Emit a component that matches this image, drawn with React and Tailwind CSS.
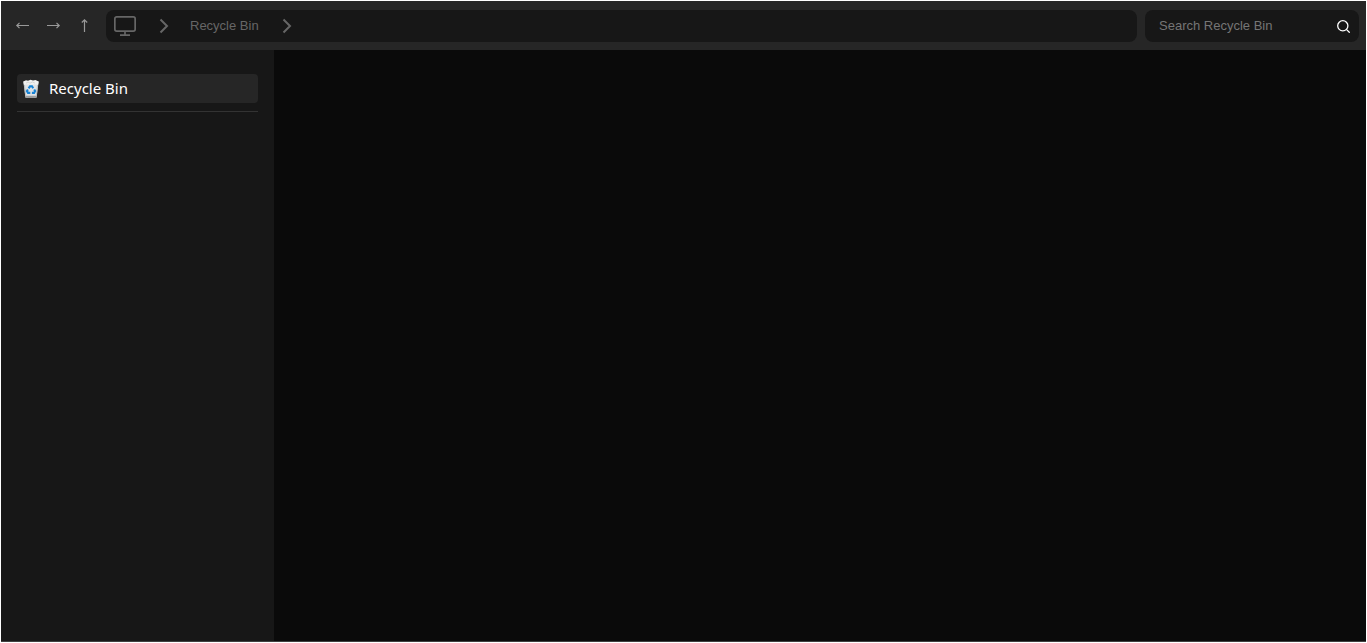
import React, { useState } from 'react';

const ArrowIcon = ({ className }) => (
  <svg width="15" height="15" viewBox="0 0 15 15" fill="none" stroke="currentColor" strokeWidth="1.2" className={className}>
    <path d="M1.5 7.5H14M4.5 4.8L1.8 7.5L4.5 10.2" />
  </svg>
);

const MonitorIcon = () => (
  <svg width="24" height="24" viewBox="0 0 24 24" fill="none" stroke="currentColor" strokeWidth="1.7" strokeLinejoin="round">
    <rect x="0.85" y="2.85" width="20.3" height="14.3" rx="1.8" />
    <path d="M11 17.5V21M6 21.2H16" />
  </svg>
);

const Chevron = () => (
  <svg width="12" height="16" viewBox="0 0 12 16" fill="none" stroke="currentColor" strokeWidth="2">
    <path d="M2.5 1.5L9 8L2.5 14.5" />
  </svg>
);

const SearchIcon = () => (
  <svg width="15" height="15" viewBox="0 0 15 15" fill="none" stroke="currentColor" strokeWidth="1.3" strokeLinecap="round">
    <circle cx="6.8" cy="6.8" r="5.1" />
    <path d="M10.6 10.6L13.3 13.3" />
  </svg>
);

const RecycleBinIcon = () => (
  <svg width="16" height="20" viewBox="0 0 16 20">
    <path d="M0.4 2.5L15.6 2.5L13.6 18.6Q8 19.6 2.4 18.6Z" fill="#dfe2e4" />
    <path d="M0.4 2.5L3 1.2L5 1.8L7.5 0.8L10 1.6L12.5 1L15.6 2.5L15.2 5.5L0.8 5.5Z" fill="#f1f1f0" />
    <path d="M3 4.2L5 3L7 4.2L9.5 3L12 4.2" fill="none" stroke="#c3c3c1" strokeWidth="0.6" />
    <path d="M2.2 16.8L13.8 16.8L13.6 18.6Q8 19.6 2.4 18.6Z" fill="#9b9d9e" />
    <path d="M1.4 6L2.8 17M14.6 6L13.2 17" stroke="#b4b7b9" strokeWidth="0.8" />
    <g fill="none" stroke="#1682d4" strokeWidth="2.1">
      <path d="M5.6 9.4L7 7.3H9L10.2 9.2" />
      <path d="M11.2 10.4L12.1 12L11.1 13.9H8.9" />
      <path d="M7.3 13.9H5L3.9 12L4.9 10.5" />
    </g>
  </svg>
);

const places = ['Recycle Bin'];

const App = () => {
  const [search, setSearch] = useState('');
  const [selected, setSelected] = useState('Recycle Bin');

  return (
    <div className="flex h-screen flex-col border border-white bg-[#0a0a0a] font-['Liberation_Sans',sans-serif]">
      {/* Toolbar */}
      <header className="flex items-center gap-2 bg-[#262626] pt-[9px] pr-[7px] pb-2 pl-3.5">
        <nav className="flex flex-1 items-center gap-3.5">
          <div className="flex items-center gap-4 pb-0.5 text-[#999999]">
            <button type="button" aria-label="Back">
              <ArrowIcon />
            </button>
            <button type="button" aria-label="Forward">
              <ArrowIcon className="rotate-180" />
            </button>
            <button type="button" aria-label="Up">
              <ArrowIcon className="rotate-90" />
            </button>
          </div>
          <div className="flex h-8 flex-1 items-center rounded-lg bg-[#171717] px-2 text-[#666666]">
            <button type="button" aria-label="This PC">
              <MonitorIcon />
            </button>
            <span className="ml-5">
              <Chevron />
            </span>
            <button type="button" className="mr-[22px] ml-5 text-[13px] leading-5">Recycle Bin</button>
            <Chevron />
          </div>
        </nav>
        <div className="flex h-8 w-[214px] items-center rounded-lg bg-[#171717] pr-2 pl-3.5">
          <input
            type="text"
            aria-label="Search Recycle Bin"
            placeholder="Search Recycle Bin"
            value={search}
            onChange={(e) => setSearch(e.target.value)}
            className="min-w-0 flex-1 bg-transparent text-[13px] leading-5 text-white outline-none placeholder:text-[#757575]"
          />
          <button type="button" aria-label="Search" className="text-white">
            <SearchIcon />
          </button>
        </div>
      </header>

      <div className="flex flex-1 border-b border-neutral-700">
        {/* Sidebar */}
        <aside className="w-1/5 bg-[#171717] px-4 py-6">
          <ul className="border-b border-[#333333] pb-2">
            {places.map((place) => (
              <li key={place}>
                <button
                  type="button"
                  onClick={() => setSelected(place)}
                  className={`flex w-full items-center gap-2.5 rounded px-1.5 py-1 font-['Noto_Sans',sans-serif] text-[15px] leading-[21px] text-white ${
                    selected === place ? 'bg-[#262626]' : ''
                  }`}
                >
                  <RecycleBinIcon />
                  {place}
                </button>
              </li>
            ))}
          </ul>
        </aside>
        <main className="flex-1" />
      </div>
    </div>
  );
};

export default App;
